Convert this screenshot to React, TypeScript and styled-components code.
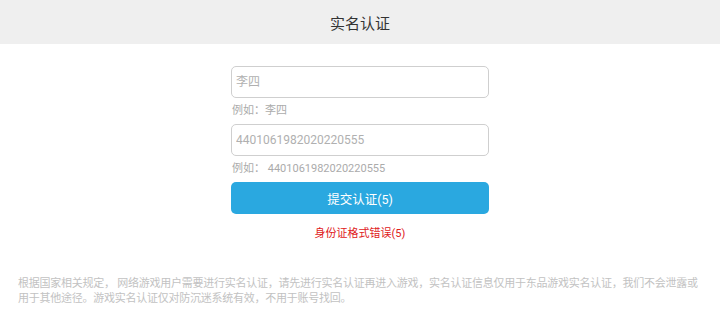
import styled, { createGlobalStyle } from 'styled-components';

const GlobalStyle = createGlobalStyle`
  html, body {
    margin: 0;
    padding: 0;
    background: #ffffff;
    font-family: Roboto, "Noto Sans CJK SC", sans-serif;
  }
`;

const Page = styled.div`
  width: 720px;
  height: 324px;
  display: flex;
  flex-direction: column;
  overflow: hidden;
`;

const TitleBar = styled.header`
  height: 44px;
  background: #efefef;
  display: flex;
  align-items: center;
  justify-content: center;
  color: #333333;
  font-size: 15px;
  flex-shrink: 0;
`;

const Form = styled.section`
  width: 258px;
  margin: 22px auto 0;
  display: flex;
  flex-direction: column;
`;

const Field = styled.input`
  box-sizing: border-box;
  width: 100%;
  height: 32px;
  border: 1px solid #cfcfcf;
  border-radius: 5px;
  padding: 0 4px;
  font-family: Roboto, "Noto Sans CJK SC", sans-serif;
  font-size: 12px;
  color: #333;
  outline: none;

  &::placeholder {
    color: #b0b0b0;
  }
`;

const Hint = styled.p`
  margin: 0;
  height: 26px;
  line-height: 25px;
  padding-left: 1px;
  font-size: 11px;
  color: #ababab;
`;

const Submit = styled.button`
  height: 32px;
  border: none;
  border-radius: 5px;
  background: #2aa8e0;
  color: #ffffff;
  font-family: Roboto, "Noto Sans CJK SC", sans-serif;
  font-size: 12.5px;
`;

const Error = styled.p`
  margin: 10px 0 0;
  text-align: center;
  font-size: 11px;
  color: #e0201b;
`;

const Notice = styled.p`
  margin: 36px 0 0;
  padding: 0 18px;
  font-size: 11px;
  line-height: 15px;
  letter-spacing: -0.25px;
  color: #c2c2c2;
`;

export default function App() {
  return (
    <Page>
      <GlobalStyle />
      <TitleBar>实名认证</TitleBar>
      <Form>
        <Field placeholder='李四' />
        <Hint>例如：李四</Hint>
        <Field placeholder='4401061982020220555' />
        <Hint>例如： 4401061982020220555</Hint>
        <Submit>提交认证(5)</Submit>
        <Error>身份证格式错误(5)</Error>
      </Form>
      <Notice>
        根据国家相关规定， 网络游戏用户需要进行实名认证，请先进行实名认证再进入游戏，实名认证信息仅用于东品游戏实名认证，我们不会泄露或用于其他途径。游戏实名认证仅对防沉迷系统有效，不用于账号找回。
      </Notice>
    </Page>
  );
}
